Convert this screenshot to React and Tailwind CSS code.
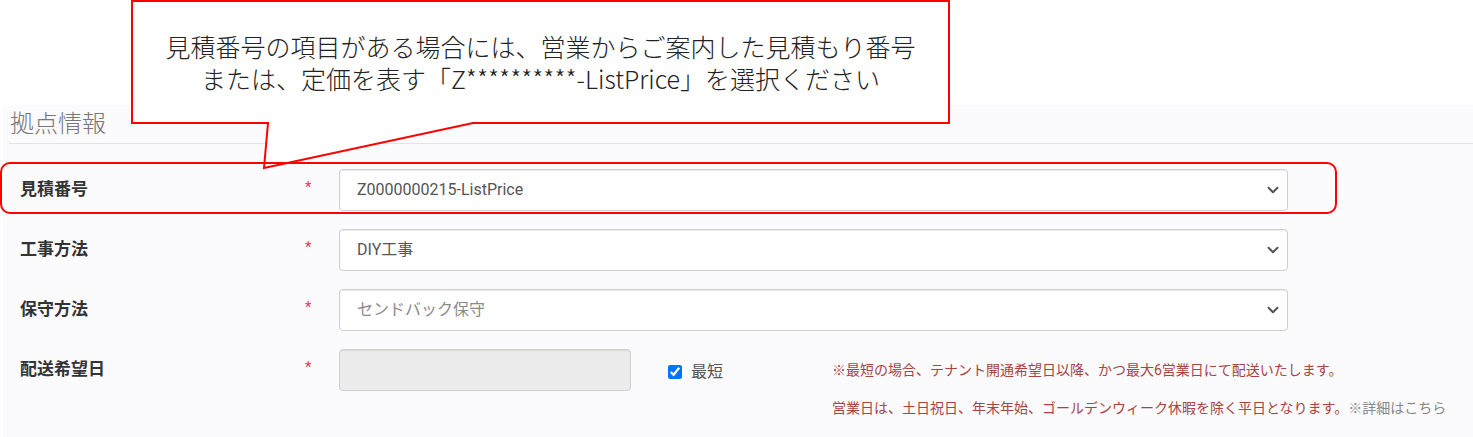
import { ChevronDown } from 'lucide-react';

const uiFont = { fontFamily: 'Roboto, "Noto Sans CJK JP", sans-serif' };

function SelectBox({ value, muted }) {
  return (
    <div className="flex h-[42px] w-[949px] items-center justify-between rounded-[4px] border border-[#cfcfcf] bg-white pl-[17px] pr-[5px] shadow-[inset_0_1px_1px_rgba(0,0,0,0.08)]">
      <span className={`text-[16px] ${muted ? 'text-[#8a8a8a]' : 'text-[#555]'}`}>{value}</span>
      <ChevronDown size={18} strokeWidth={2.6} className="text-[#555]" />
    </div>
  );
}

function FieldRow({ label, children }) {
  return (
    <div className="flex h-[60px] items-start pl-[17px]">
      <div className="flex h-[42px] w-[285px] items-center text-[17px] font-bold text-[#333]">{label}</div>
      <div className="w-[34px] pt-[11px] text-[15px] leading-[14px] text-[#ff2d55]">*</div>
      {children}
    </div>
  );
}

export default function App() {
  return (
    <div className="relative h-[437px] w-[1473px] overflow-hidden bg-white" style={uiFont}>
      <div className="h-[105px]" />

      <div className="ml-[3px] h-[332px] bg-[#fbfafd]">
        <div className="ml-[6px] h-[39px] border-b border-[#e4e4e6]">
          <span className="pl-[1px] text-[24px] font-light leading-[38px] text-[#777]">拠点情報</span>
        </div>

        <div className="pt-[25px]">
          <FieldRow label="見積番号">
            <SelectBox value="Z0000000215-ListPrice" />
          </FieldRow>
          <FieldRow label="工事方法">
            <SelectBox value="DIY工事" />
          </FieldRow>
          <FieldRow label="保守方法">
            <SelectBox value="センドバック保守" muted />
          </FieldRow>
          <FieldRow label="配送希望日">
            <div className="h-[42px] w-[292px] rounded-[4px] border border-[#cfcfcf] bg-[#ececec] shadow-[inset_0_1px_1px_rgba(0,0,0,0.08)]" />
            <label className="flex w-[201px] items-center gap-[9px] pl-[37px] pt-[11px]">
              <input type="checkbox" checked readOnly className="h-[14px] w-[14px] accent-[#0075ff]" />
              <span className="text-[16px] text-[#555]">最短</span>
            </label>
            <div className="pt-[11px] text-[14px] leading-[20px] text-[#a94442]">
              <p>※最短の場合、テナント開通希望日以降、かつ最大6営業日にて配送いたします。</p>
              <p className="mt-[18px]">
                営業日は、土日祝日、年末年始、ゴールデンウィーク休暇を除く平日となります。
                <span className="text-[#888]">※詳細はこちら</span>
              </p>
            </div>
          </FieldRow>
        </div>
      </div>

      {/* callout annotation */}
      <svg className="pointer-events-none absolute left-0 top-0" width="1473" height="437">
        <polygon
          points="132,1 949,1 949,123 473,123 264,168 268,123 132,123"
          fill="#ffffff"
          stroke="#ff0000"
          strokeWidth="2"
        />
      </svg>
      <div
        className="absolute left-[132px] top-0 flex h-[123px] w-[817px] flex-col items-center justify-center text-center text-[25px] font-light leading-[32px] text-[#222]"
        style={{ fontFamily: '"Noto Sans CJK JP", sans-serif' }}
      >
        <span className="block">見積番号の項目がある場合には、営業からご案内した見積もり番号</span>
        <span className="block">または、定価を表す「Z**********-ListPrice」を選択ください</span>
      </div>

      {/* highlight around first row */}
      <div className="pointer-events-none absolute left-0 top-[162px] h-[52px] w-[1337px] rounded-[10px] border-2 border-[#ff0000]" />
    </div>
  );
}
